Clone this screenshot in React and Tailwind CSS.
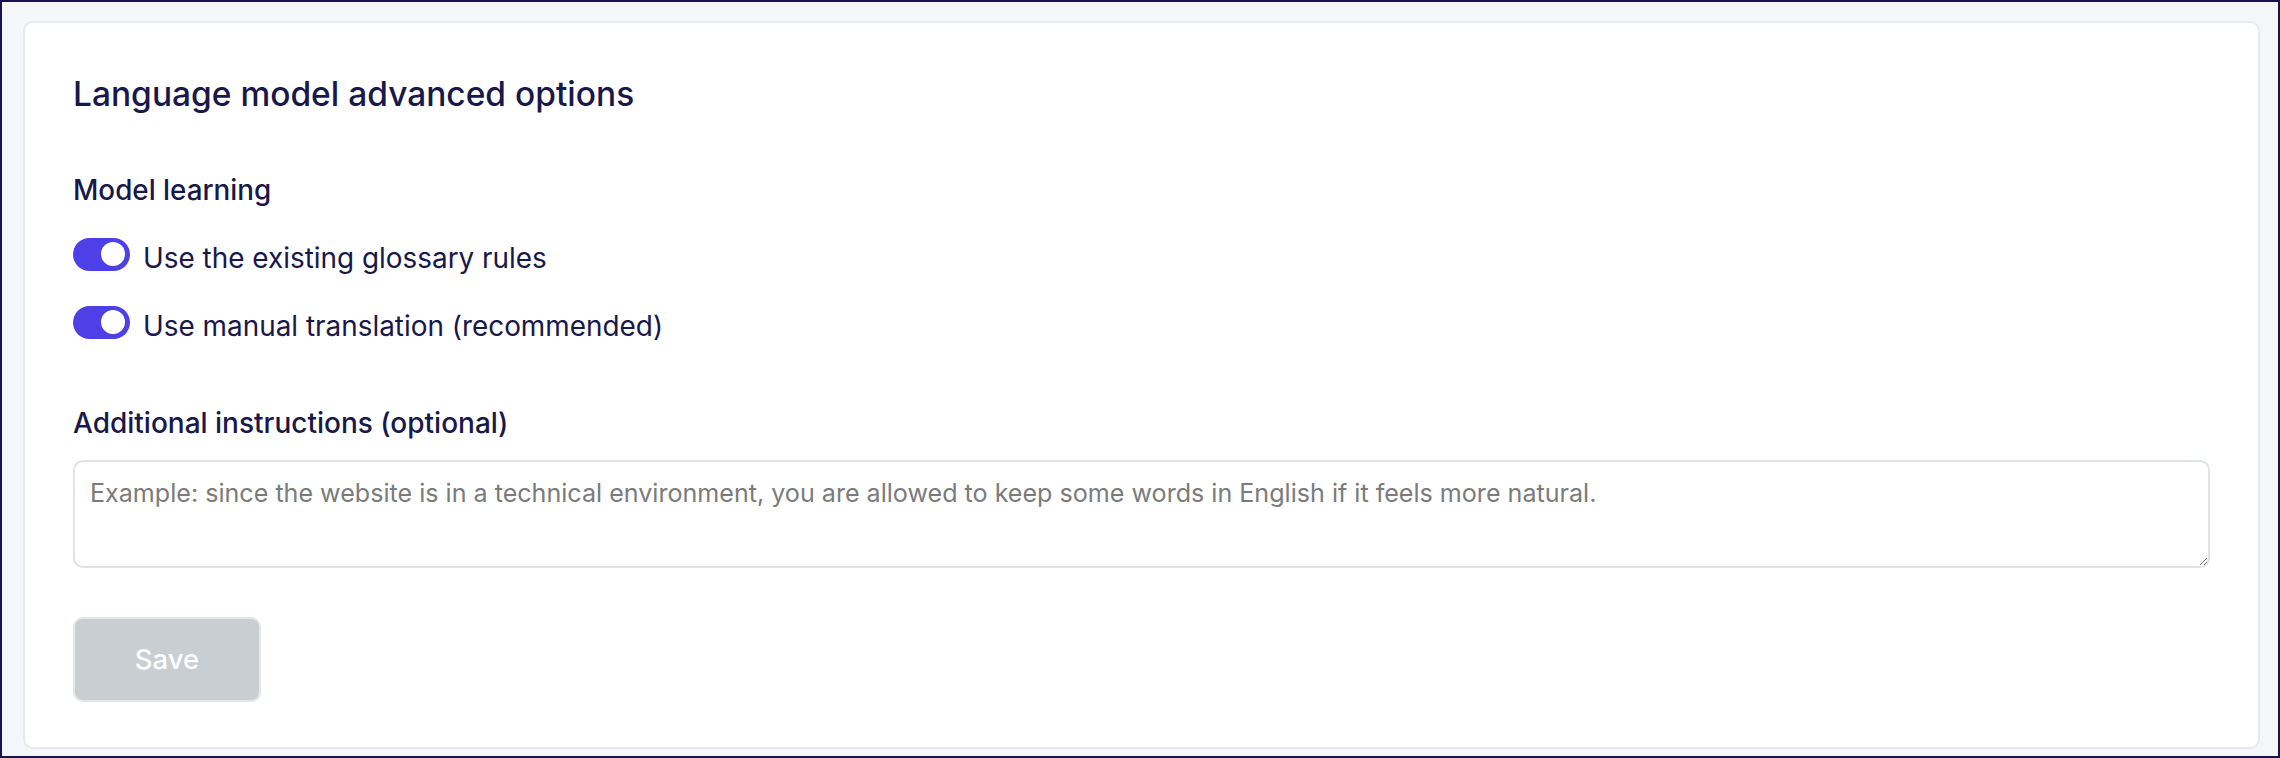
export default function App() {
  const toggles = ["Use the existing glossary rules", "Use manual translation (recommended)"];
  return (
    <div
      className="w-[2280px] h-[758px] box-border border-2 border-[#17134d] bg-[#f5f6fa] pl-[21px] pt-[19px]"
      style={{ fontFamily: "Inter, 'Noto Sans', sans-serif" }}
    >
      <div className="w-[2237px] h-[728px] box-border border-2 border-[#e8e9ee] rounded-[10px] bg-white px-[48px] pt-[51px] text-[#19184a]">
        <h1 className="text-[33.5px] leading-[40px] font-medium">Language model advanced options</h1>
        <h2 className="mt-[58px] text-[27.8px] leading-[36px] font-medium">Model learning</h2>
        <div className="mt-[29px] flex flex-col gap-[34px]">
          {toggles.map((t) => (
            <label key={t} className="flex items-center gap-[13px] h-[34px]">
              <span className="w-[57px] h-[33px] rounded-full bg-[#4c40e6] flex items-center justify-end pr-[5px] box-border shrink-0">
                <span className="w-[24px] h-[24px] rounded-full bg-white" />
              </span>
              <span className="text-[27.9px] leading-[34px] mt-[7px]">{t}</span>
            </label>
          ))}
        </div>
        <h2 className="mt-[66px] text-[28px] leading-[36px] font-medium">Additional instructions (optional)</h2>
        <textarea
          className="mt-[19px] block w-full h-[108px] box-border border-2 border-[#dfe2e6] rounded-[10px] pl-[15px] pr-[10px] pt-[14px] text-[25.1px] leading-[34px] text-[#19184a] placeholder:text-[#7b7b7b] outline-none"
          style={{ fontFamily: "Inter, 'Noto Sans', sans-serif" }}
          placeholder="Example: since the website is in a technical environment, you are allowed to keep some words in English if it feels more natural."
        />
        <button
          className="mt-[49px] w-[188px] h-[85px] box-border border-2 border-[#e4e6e9] rounded-[10px] bg-[#c9ced3] text-white text-[27.5px] font-medium flex items-center justify-center"
          style={{ fontFamily: "Inter, 'Noto Sans', sans-serif" }}
        >
          Save
        </button>
      </div>
    </div>
  );
}
